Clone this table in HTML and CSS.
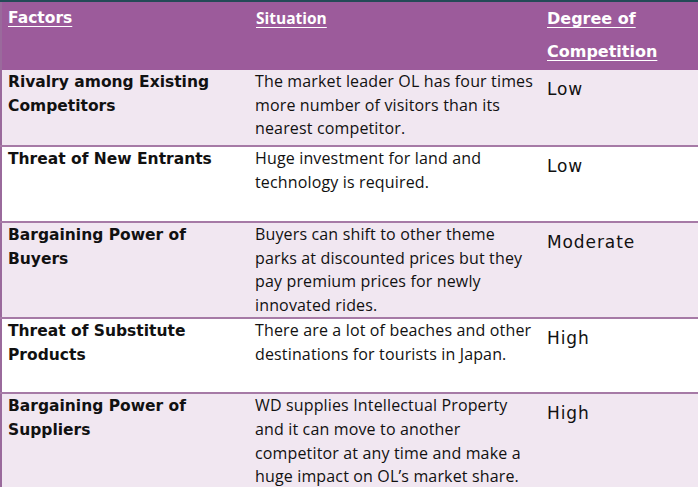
FILE: index.html
```html
<!DOCTYPE html>
<html>
<head>
<meta charset="utf-8">
<link rel="stylesheet" href="styles.css">
</head>
<body>
<table class="porter">
  <colgroup>
    <col class="c-factor">
    <col class="c-situation">
    <col class="c-degree">
  </colgroup>
  <thead>
    <tr class="head-row">
      <th class="h-factor"><span class="u">Factors</span></th>
      <th class="h-situation"><span class="u">Situation</span></th>
      <th class="h-degree"><span class="u">Degree of</span><br><span class="u">Competition</span></th>
    </tr>
  </thead>
  <tbody>
    <tr class="row r1 shade">
      <td class="factor">Rivalry among Existing Competitors</td>
      <td class="situation">The market leader OL has four times more number of visitors than its nearest competitor.</td>
      <td class="degree">Low</td>
    </tr>
    <tr class="row r2">
      <td class="factor">Threat of New Entrants</td>
      <td class="situation">Huge investment for land and technology is required.</td>
      <td class="degree">Low</td>
    </tr>
    <tr class="row r3 shade">
      <td class="factor">Bargaining Power of Buyers</td>
      <td class="situation">Buyers can shift to other theme parks at discounted prices but they pay premium prices for newly innovated rides.</td>
      <td class="degree">Moderate</td>
    </tr>
    <tr class="row r4">
      <td class="factor">Threat of Substitute Products</td>
      <td class="situation">There are a lot of beaches and other destinations for tourists in Japan.</td>
      <td class="degree">High</td>
    </tr>
    <tr class="row r5 shade">
      <td class="factor">Bargaining Power of Suppliers</td>
      <td class="situation">WD supplies Intellectual Property and it can move to another competitor at any time and make a huge impact on OL’s market share.</td>
      <td class="degree">High</td>
    </tr>
  </tbody>
</table>
</body>
</html>
```

FILE: styles.css
```css
html, body {
  margin: 0;
  padding: 0;
  background: #ffffff;
  overflow: hidden;
}

.porter {
  width: 698px;
  table-layout: fixed;
  border-collapse: collapse;
  border-top: 2px solid #244a57;
  border-left: 2px solid #9a6a9c;
}

.c-factor { width: 248px; }
.c-situation { width: 292px; }
.c-degree { width: 158px; }

.head-row {
  background: #9c5b9b;
  height: 69px;
}

.head-row th {
  text-align: left;
  vertical-align: top;
  color: #ffffff;
  font-family: "DejaVu Sans", sans-serif;
  font-weight: bold;
  font-size: 16px;
  line-height: 33px;
  padding: 0 0 0 6px;
}

.head-row .h-factor {
  font-size: 15.5px;
}

.head-row .h-situation {
  font-family: "Open Sans", sans-serif;
  font-size: 15.5px;
  padding-left: 7px;
}

.u {
  text-decoration: underline;
  text-underline-offset: 3px;
  text-decoration-thickness: 1px;
}

.row td {
  vertical-align: top;
  border-bottom: 2px solid #a67aa6;
  color: #111111;
}

.shade { background: #f1e7f1; }

.r1 { height: 76px; }
.r2 { height: 76px; }
.r3 { height: 95px; }
.r4 { height: 75px; }
.r5 { height: 94px; }

.factor {
  font-family: "DejaVu Sans", sans-serif;
  font-weight: bold;
  font-size: 15.5px;
  line-height: 23.5px;
  padding: 1px 14px 0 6px;
}

.situation {
  font-family: "Open Sans", sans-serif;
  font-size: 16px;
  letter-spacing: 0.15px;
  line-height: 23.6px;
  padding: 0 4px 0 6px;
}

.degree {
  font-family: "DejaVu Sans", sans-serif;
  font-size: 17px;
  letter-spacing: 0.9px;
  line-height: 24px;
  padding: 7px 0 0 6px;
}
```
